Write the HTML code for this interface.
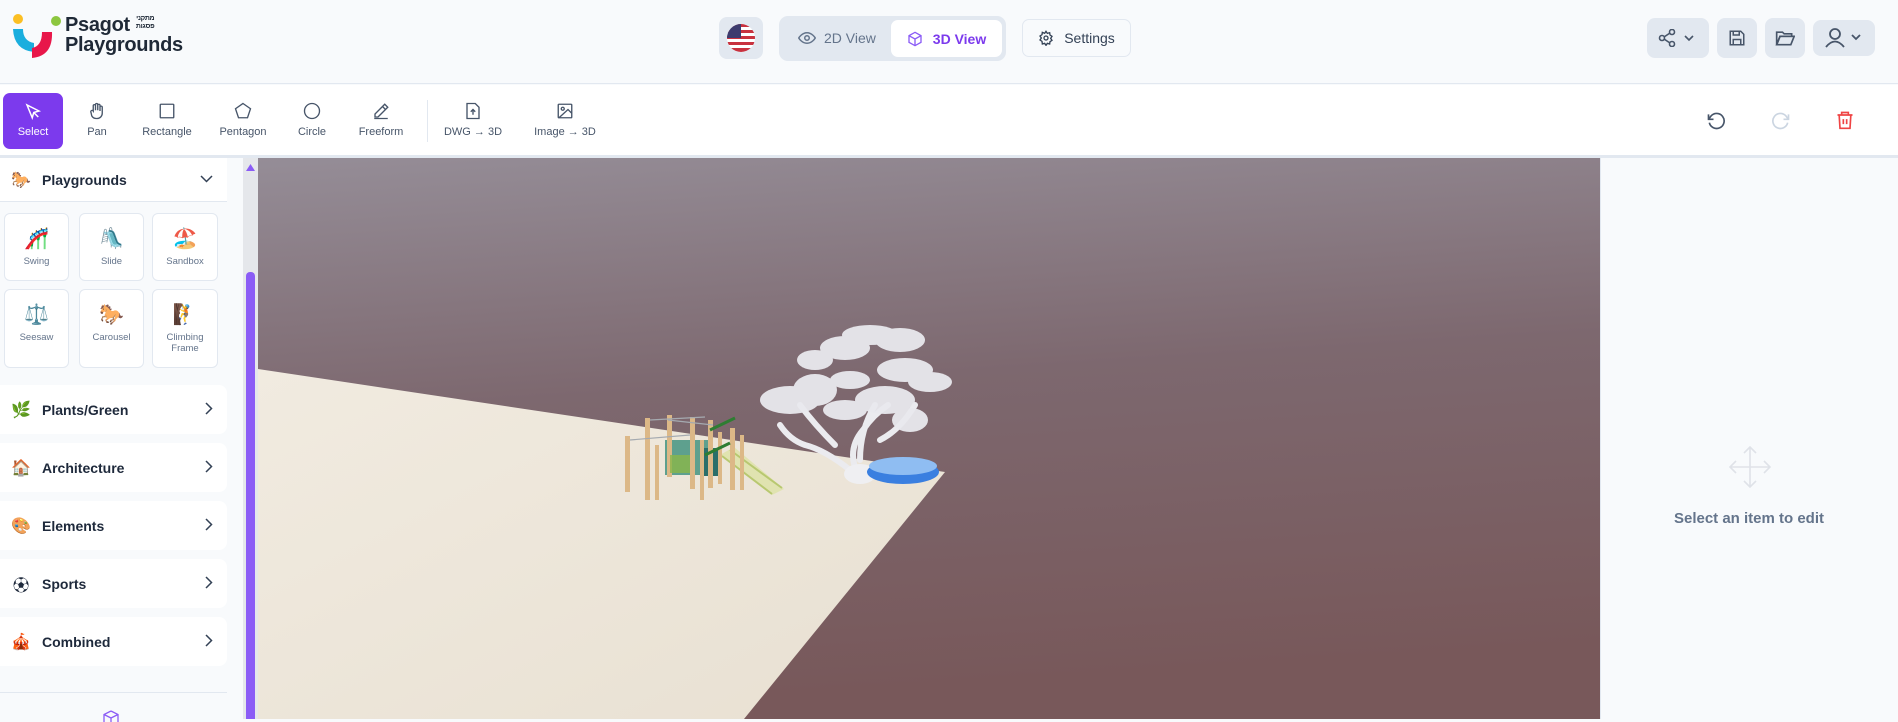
<!DOCTYPE html>
<html><head><meta charset="utf-8">
<style>
*{box-sizing:border-box;margin:0;padding:0}
body{width:1898px;height:719px;overflow:hidden;background:#f8fafc;font-family:"Liberation Sans","Noto Sans CJK SC",sans-serif;position:relative;color:#1e293b}
.abs{position:absolute}
.hdr{left:0;top:0;width:1898px;height:84px;background:#f8fafc;border-bottom:1px solid #e2e8f0}
.btn{background:#e2e8f0;border-radius:8px;display:flex;align-items:center;justify-content:center}
.tb{left:0;top:85px;width:1898px;height:73px;background:#fff;border-bottom:3px solid #e2e8f0}
.tool{position:absolute;top:93px;height:56px;width:70px;margin-left:-35px;text-align:center;font-size:11px;color:#475569}
.tool svg{display:block;margin:9px auto 6px}
.side{left:0;top:158px;width:243px;height:561px;background:#f8fafc}
.card{position:absolute;background:#fff;border:1px solid #e2e8f0;border-radius:6px;text-align:center;font-size:9.5px;color:#64748b}
.card .e{font-size:20px;display:block;margin-top:12px;height:30px}
.sec{position:absolute;left:0;width:227px;height:49px;background:#fff;border-radius:0 8px 8px 0;font-size:14px;font-weight:bold;color:#1e293b;display:flex;align-items:center}
.sec .i{width:42px;text-align:center;font-size:16px}
.sec .c{position:absolute;right:14px;top:17px}
</style></head><body>

<div class="abs hdr"></div>
<svg class="abs" style="left:10px;top:12px" width="56" height="48" viewBox="0 0 56 48">
<circle cx="8" cy="7" r="5" fill="#fbbf24"/>
<circle cx="46" cy="9" r="5" fill="#8cc63f"/>
<path d="M3 17 Q4 38 24 40 L24 31 Q13 29 13 17 Z" fill="#1aaede"/>
<path d="M42 20 Q43 44 22 46 L22 36 Q32 34 32 20 Z" fill="#e8174a"/>
</svg>
<div class="abs" style="left:65px;top:15px;font-size:20px;font-weight:bold;color:#1f2937;line-height:20px;letter-spacing:-0.3px">Psagot<span style="font-size:7px;margin-left:6px;vertical-align:top;line-height:8px;display:inline-block;text-align:right">מתקני<br>פסגות</span><br>Playgrounds</div>

<div class="abs btn" style="left:719px;top:17px;width:44px;height:42px">
<svg width="28" height="28" viewBox="0 0 28 28"><defs><clipPath id="c"><circle cx="14" cy="14" r="14"/></clipPath></defs><g clip-path="url(#c)"><rect width="28" height="28" fill="#fff"/><rect y="0" width="28" height="3" fill="#c8323f"/><rect y="6" width="28" height="3" fill="#c8323f"/><rect y="12" width="28" height="3" fill="#c8323f"/><rect y="18" width="28" height="3" fill="#c8323f"/><rect y="24" width="28" height="4" fill="#c8323f"/><rect width="14" height="14" fill="#3c3b6e"/></g></svg></div>

<div class="abs btn" style="left:779px;top:16px;width:227px;height:45px;border-radius:9px"></div>
<div class="abs" style="left:798px;top:30px;font-size:14px;color:#64748b;display:flex;align-items:center"><svg width="18" height="14" viewBox="0 0 24 18" fill="none" stroke="#64748b" stroke-width="2"><path d="M1 9s4-7 11-7 11 7 11 7-4 7-11 7S1 9 1 9z"/><circle cx="12" cy="9" r="3"/></svg><span style="margin-left:8px">2D View</span></div>
<div class="abs" style="left:891px;top:20px;width:111px;height:37px;background:#fff;border-radius:7px;display:flex;align-items:center;justify-content:center;font-size:14px;font-weight:bold;color:#7c3aed"><svg width="16" height="16" viewBox="0 0 24 24" fill="none" stroke="#8b5cf6" stroke-width="2"><path d="M12 2l9 5v10l-9 5-9-5V7z"/><path d="M3 7l9 5 9-5M12 12v10"/></svg><span style="margin-left:10px">3D View</span></div>
<div class="abs" style="left:1022px;top:19px;width:109px;height:38px;border:1px solid #e2e8f0;border-radius:7px;display:flex;align-items:center;justify-content:center;font-size:14px;color:#334155"><svg width="16" height="16" viewBox="0 0 24 24" fill="none" stroke="#334155" stroke-width="2"><circle cx="12" cy="12" r="3"/><path d="M12 2l2 3 3.5-1 .5 3.5 3 2-2 3 2 3-3 2-.5 3.5-3.5-1-2 3-2-3-3.5 1L6 17l-3-2 2-3-2-3 3-2 .5-3.5L10 5z"/></svg><span style="margin-left:10px">Settings</span></div>

<div class="abs btn" style="left:1647px;top:18px;width:62px;height:40px"><svg width="40" height="18" viewBox="0 0 40 18" fill="none" stroke="#475569" stroke-width="1.6"><circle cx="14" cy="3" r="2.5"/><circle cx="4" cy="9" r="2.5"/><circle cx="14" cy="15" r="2.5"/><path d="M6 8l6-4M6 10l6 4"/><path d="M27 7l4 4 4-4"/></svg></div>
<div class="abs btn" style="left:1717px;top:18px;width:40px;height:40px"><svg width="18" height="18" viewBox="0 0 24 24" fill="none" stroke="#475569" stroke-width="2"><path d="M3 3h14l4 4v14H3z"/><path d="M7 3v5h8V3M7 21v-7h10v7"/></svg></div>
<div class="abs btn" style="left:1765px;top:18px;width:40px;height:40px"><svg width="20" height="18" viewBox="0 0 24 20" fill="none" stroke="#475569" stroke-width="2"><path d="M2 3h7l2 2h9v3H6l-4 10z"/><path d="M2 18l4-10h17l-4 10z"/></svg></div>
<div class="abs btn" style="left:1813px;top:20px;width:62px;height:36px"><svg width="40" height="20" viewBox="0 0 40 20" fill="none" stroke="#475569" stroke-width="1.8"><circle cx="11" cy="6" r="5"/><path d="M2 19q9-11 18 0"/><path d="M28 7l4 4 4-4"/></svg></div>

<div class="abs tb"></div>
<div class="abs" style="left:3px;top:93px;width:60px;height:56px;background:#7c3aed;border-radius:7px"></div>
<div class="tool" style="left:33px;color:#fff"><svg width="18" height="18" viewBox="0 0 24 24" fill="none" stroke="#fff" stroke-width="2"><path d="M4 4l7 17 2-7 7-2z"/><path d="M13 14l6 6"/></svg>Select</div>
<div class="tool" style="left:97px"><svg width="18" height="18" viewBox="0 0 24 24" fill="none" stroke="#475569" stroke-width="1.8"><path d="M7 12V5a1.5 1.5 0 013 0v6V3.5a1.5 1.5 0 013 0V11V4.5a1.5 1.5 0 013 0V12v-5a1.5 1.5 0 013 0v8a7 7 0 01-7 7h-1a7 7 0 01-6-3.5L4 14a1.5 1.5 0 013-2z"/></svg>Pan</div>
<div class="tool" style="left:167px"><svg width="18" height="18" viewBox="0 0 24 24" fill="none" stroke="#475569" stroke-width="1.8"><rect x="3" y="3" width="18" height="18" rx="1"/></svg>Rectangle</div>
<div class="tool" style="left:243px"><svg width="18" height="18" viewBox="0 0 24 24" fill="none" stroke="#475569" stroke-width="1.8"><path d="M12 2l10 7-4 12H6L2 9z"/></svg>Pentagon</div>
<div class="tool" style="left:312px"><svg width="18" height="18" viewBox="0 0 24 24" fill="none" stroke="#475569" stroke-width="1.8"><circle cx="12" cy="12" r="10"/></svg>Circle</div>
<div class="tool" style="left:381px"><svg width="18" height="18" viewBox="0 0 24 24" fill="none" stroke="#475569" stroke-width="1.8"><path d="M17 3l4 4L8 20H4v-4z"/><path d="M14 6l4 4M3 22h18"/></svg>Freeform</div>
<div class="abs" style="left:427px;top:100px;width:1px;height:42px;background:#e2e8f0"></div>
<div class="tool" style="left:473px;width:80px;margin-left:-40px"><svg width="16" height="18" viewBox="0 0 20 24" fill="none" stroke="#475569" stroke-width="1.8"><path d="M2 2h11l5 5v15H2z"/><path d="M10 17v-7M7 13l3-3 3 3"/></svg>DWG → 3D</div>
<div class="tool" style="left:565px;width:80px;margin-left:-40px"><svg width="18" height="18" viewBox="0 0 24 24" fill="none" stroke="#475569" stroke-width="1.8"><rect x="3" y="3" width="18" height="18" rx="1"/><circle cx="9" cy="9" r="2"/><path d="M21 15l-5-5L4 21"/></svg>Image → 3D</div>
<svg class="abs" style="left:1706px;top:111px" width="20" height="20" viewBox="0 0 24 24" fill="none" stroke="#475569" stroke-width="2"><path d="M3 4v6h6"/><path d="M4 14a9 9 0 102-8l-3 4"/></svg>
<svg class="abs" style="left:1771px;top:111px" width="20" height="20" viewBox="0 0 24 24" fill="none" stroke="#cbd5e1" stroke-width="2"><path d="M21 4v6h-6"/><path d="M20 14a9 9 0 11-2-8l3 4"/></svg>
<svg class="abs" style="left:1835px;top:110px" width="20" height="20" viewBox="0 0 24 24" fill="none" stroke="#ef4444" stroke-width="2"><path d="M3 6h18M8 6V3h8v3M5 6l1 16h12l1-16M10 11v6M14 11v6"/></svg>

<div class="abs side"></div>
<div class="abs" style="left:0;top:158px;width:227px;height:44px;background:#fff;border-bottom:1px solid #e2e8f0;display:flex;align-items:center;font-size:14px;font-weight:bold"><span style="width:42px;text-align:center;font-size:16px">🐎</span>Playgrounds<svg style="position:absolute;right:14px;top:17px" width="13" height="8" viewBox="0 0 13 8" fill="none" stroke="#334155" stroke-width="1.5"><path d="M1 1l5.5 5.5L12 1"/></svg></div>
<div class="card" style="left:4px;top:213px;width:65px;height:68px"><span class="e">🎢</span>Swing</div>
<div class="card" style="left:79px;top:213px;width:65px;height:68px"><span class="e">🛝</span>Slide</div>
<div class="card" style="left:152px;top:213px;width:66px;height:68px"><span class="e">🏖️</span>Sandbox</div>
<div class="card" style="left:4px;top:289px;width:65px;height:79px"><span class="e">⚖️</span>Seesaw</div>
<div class="card" style="left:79px;top:289px;width:65px;height:79px"><span class="e">🐎</span>Carousel</div>
<div class="card" style="left:152px;top:289px;width:66px;height:79px"><span class="e">🧗</span>Climbing<br>Frame</div>

<div class="sec" style="top:385px"><span class="i">🌿</span>Plants/Green<svg class="c" width="8" height="13" viewBox="0 0 8 13" fill="none" stroke="#334155" stroke-width="1.5"><path d="M1 1l5.5 5.5L1 12"/></svg></div>
<div class="sec" style="top:443px"><span class="i">🏠</span>Architecture<svg class="c" width="8" height="13" viewBox="0 0 8 13" fill="none" stroke="#334155" stroke-width="1.5"><path d="M1 1l5.5 5.5L1 12"/></svg></div>
<div class="sec" style="top:501px"><span class="i">🎨</span>Elements<svg class="c" width="8" height="13" viewBox="0 0 8 13" fill="none" stroke="#334155" stroke-width="1.5"><path d="M1 1l5.5 5.5L1 12"/></svg></div>
<div class="sec" style="top:559px"><span class="i">⚽</span>Sports<svg class="c" width="8" height="13" viewBox="0 0 8 13" fill="none" stroke="#334155" stroke-width="1.5"><path d="M1 1l5.5 5.5L1 12"/></svg></div>
<div class="sec" style="top:617px"><span class="i">🎪</span>Combined<svg class="c" width="8" height="13" viewBox="0 0 8 13" fill="none" stroke="#334155" stroke-width="1.5"><path d="M1 1l5.5 5.5L1 12"/></svg></div>
<div class="abs" style="left:0;top:692px;width:227px;height:1px;background:#e2e8f0"></div>
<svg class="abs" style="left:103px;top:710px" width="16" height="12" viewBox="0 0 16 12" fill="none" stroke="#8b5cf6" stroke-width="1.3"><path d="M8 1l7 3.5v8M1 12V4.5L8 1M1 4.5L8 8l7-3.5M8 8v4"/></svg>

<div class="abs" style="left:243px;top:158px;width:15px;height:561px;background:#e5e7eb"></div>
<svg class="abs" style="left:246px;top:164px" width="9" height="7" viewBox="0 0 9 7"><path d="M0 7L4.5 0 9 7z" fill="#8b5cf6"/></svg>
<div class="abs" style="left:246px;top:272px;width:9px;height:447px;background:#8b5cf6;border-radius:4px 4px 0 0"></div>

<svg class="abs" style="left:258px;top:158px" width="1342" height="561" viewBox="258 158 1342 561">
<defs>
<linearGradient id="sky" x1="0" y1="0" x2="0.15" y2="1"><stop offset="0" stop-color="#958d97"/><stop offset="0.45" stop-color="#7d686f"/><stop offset="1" stop-color="#78585a"/></linearGradient>
<linearGradient id="fl" x1="0" y1="0" x2="1" y2="1"><stop offset="0" stop-color="#f1ebe0"/><stop offset="1" stop-color="#e8e0d2"/></linearGradient>
</defs>
<rect x="258" y="158" width="1342" height="561" fill="url(#sky)"/>
<polygon points="258,369 945,472 744,719 258,719" fill="url(#fl)"/>
<!-- tree trunk/branches -->
<path d="M858 475q-12-25 5-45q10-15 25-25M850 470q-25-20-45-25q-15-5-25-20M860 460q0-30 15-55M880 440q20-10 35-35M835 445q-20-20-35-40" stroke="#ebebef" stroke-width="6" fill="none" stroke-linecap="round"/>
<ellipse cx="860" cy="474" rx="16" ry="10" fill="#efeff2"/>
<!-- canopy -->
<g fill="#e9e9ee" opacity="0.95">
<ellipse cx="790" cy="400" rx="30" ry="14"/>
<ellipse cx="815" cy="390" rx="22" ry="16"/>
<ellipse cx="815" cy="360" rx="18" ry="10"/>
<ellipse cx="845" cy="348" rx="25" ry="12"/>
<ellipse cx="870" cy="335" rx="28" ry="10"/>
<ellipse cx="900" cy="340" rx="25" ry="12"/>
<ellipse cx="930" cy="382" rx="22" ry="10"/>
<ellipse cx="905" cy="370" rx="28" ry="12"/>
<ellipse cx="885" cy="400" rx="30" ry="14"/>
<ellipse cx="910" cy="420" rx="18" ry="12"/>
<ellipse cx="845" cy="410" rx="22" ry="10"/>
<ellipse cx="850" cy="380" rx="20" ry="9"/>
</g>
<!-- pond -->
<ellipse cx="903" cy="472" rx="36" ry="12" fill="#3a7fe0"/>
<ellipse cx="903" cy="466" rx="34" ry="9" fill="#8fbdf2"/>
<!-- playground -->
<g>
<path d="M720 455l52 40 12 -6 -50-42z" fill="#e0e3b0"/>
<path d="M722 456l50 38M730 450l52 38" stroke="#b8c870" stroke-width="2"/>
<rect x="665" y="440" width="45" height="35" fill="#3a8f7a" opacity="0.8"/>
<rect x="700" y="448" width="18" height="28" fill="#2b6f6a"/>
<g fill="#dcb887">
<rect x="625" y="436" width="5" height="56"/>
<rect x="645" y="418" width="5" height="82"/>
<rect x="667" y="415" width="5" height="62"/>
<rect x="690" y="417" width="5" height="72"/>
<rect x="708" y="420" width="5" height="68"/>
<rect x="730" y="428" width="5" height="62"/>
<rect x="740" y="435" width="4" height="55"/>
<rect x="655" y="445" width="4" height="55"/>
<rect x="700" y="440" width="4" height="60"/>
<rect x="718" y="432" width="4" height="52"/>
</g>
<path d="M630 440l60-5M650 420l55-3M668 420l45 5" stroke="#a5aab0" stroke-width="1.2"/>
<path d="M710 430l25-12M705 455l25-12" stroke="#2e7d32" stroke-width="3"/>
<rect x="670" y="455" width="20" height="18" fill="#8ab64a" opacity="0.8"/>
</g>
</svg>

<div class="abs" style="left:1600px;top:158px;width:298px;height:561px;background:#f8fafc;border-left:1px solid #e2e8f0"></div>
<svg class="abs" style="left:1729px;top:446px" width="42" height="42" viewBox="0 0 42 42" fill="none" stroke="#dfe2e8" stroke-width="1.6"><path d="M21 1v40M1 21h40M15 7l6-6 6 6M15 35l6 6 6-6M7 15l-6 6 6 6M35 15l6 6-6 6"/></svg>
<div class="abs" style="left:1600px;top:510px;width:298px;text-align:center;font-size:15px;font-weight:bold;color:#64748b">Select an item to edit</div>
</body></html>
